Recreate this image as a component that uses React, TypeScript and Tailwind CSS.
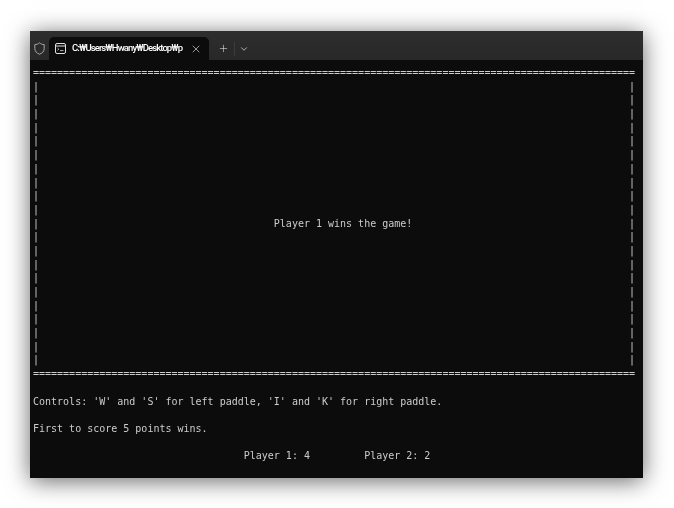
import { ChevronDown, Plus, X } from 'lucide-react';

const border = '='.repeat(100);
const side = '|' + ' '.repeat(98) + '|';
const winRow = '|' + ' '.repeat(39) + 'Player 1 wins the game!' + ' '.repeat(36) + '|';

const lines = [
  border,
  ...Array.from({ length: 10 }, () => side),
  winRow,
  ...Array.from({ length: 10 }, () => side),
  border,
  '',
  "Controls: 'W' and 'S' for left paddle, 'I' and 'K' for right paddle.",
  '',
  'First to score 5 points wins.',
  '',
  ' '.repeat(35) + 'Player 1: 4' + ' '.repeat(9) + 'Player 2: 2',
];

function ShieldIcon() {
  return (
    <svg width="11" height="13" viewBox="0 0 11 13" fill="none">
      <path
        d="M5.5 0.8C4.2 2 2.6 2.5 0.8 2.6V6.5C0.8 9.2 2.6 11.2 5.5 12.2C8.4 11.2 10.2 9.2 10.2 6.5V2.6C8.4 2.5 6.8 2 5.5 0.8Z"
        stroke="#a8a8a8"
        strokeWidth="1"
      />
    </svg>
  );
}

function TerminalIcon() {
  return (
    <svg width="11" height="11" viewBox="0 0 11 11" fill="none" className="shrink-0">
      <rect x="0.5" y="0.5" width="10" height="10" rx="1.5" stroke="#e0e0e0" strokeWidth="1" />
      <path d="M0.5 3H10.5" stroke="#e0e0e0" strokeWidth="1" />
      <path d="M2.5 5L3.8 6.2L2.5 7.4" stroke="#e0e0e0" strokeWidth="0.8" />
      <path d="M5 7.6H8.5" stroke="#e0e0e0" strokeWidth="0.8" />
    </svg>
  );
}

export default function App() {
  return (
    <div className="min-h-screen bg-white pl-[30px] pt-[31px]">
      <div className="w-[613px] h-[447px] flex flex-col bg-[#0c0c0c] shadow-[0_3px_22px_rgba(0,0,0,0.6)]">
        <div className="h-[29px] flex items-end bg-gradient-to-b from-[#2e2e2e] to-[#282828] shrink-0">
          <div className="w-[19px] h-[23px] flex items-center justify-center">
            <ShieldIcon />
          </div>
          <div className="w-[160px] h-[23px] flex items-center bg-[#0c0c0c] rounded-t-[5px] pl-[6px]">
            <TerminalIcon />
            <div className="w-[111px] ml-[6px] whitespace-nowrap text-[9.5px] font-medium tracking-[-0.9px] text-white font-['Roboto',sans-serif] [will-change:transform]">
              C:₩Users₩Hwany₩Desktop₩p
            </div>
            <X size={12} strokeWidth={1.3} color="#e4e4e4" className="ml-[7px]" />
          </div>
          <div className="h-[23px] flex items-center">
            <Plus size={11} strokeWidth={1.3} color="#e0e0e0" className="ml-[9px]" />
            <div className="w-px h-[14px] bg-[#3c3c3c] ml-[5px]" />
            <ChevronDown size={10} strokeWidth={1.8} color="#e0e0e0" className="ml-[4px]" />
          </div>
        </div>
        <pre className="pl-[3px] pt-[6px] text-[10px] leading-[13.68px] text-[#cccccc] font-['DejaVu_Sans_Mono',monospace] [will-change:transform]">
          {lines.join('\n')}
        </pre>
      </div>
    </div>
  );
}
